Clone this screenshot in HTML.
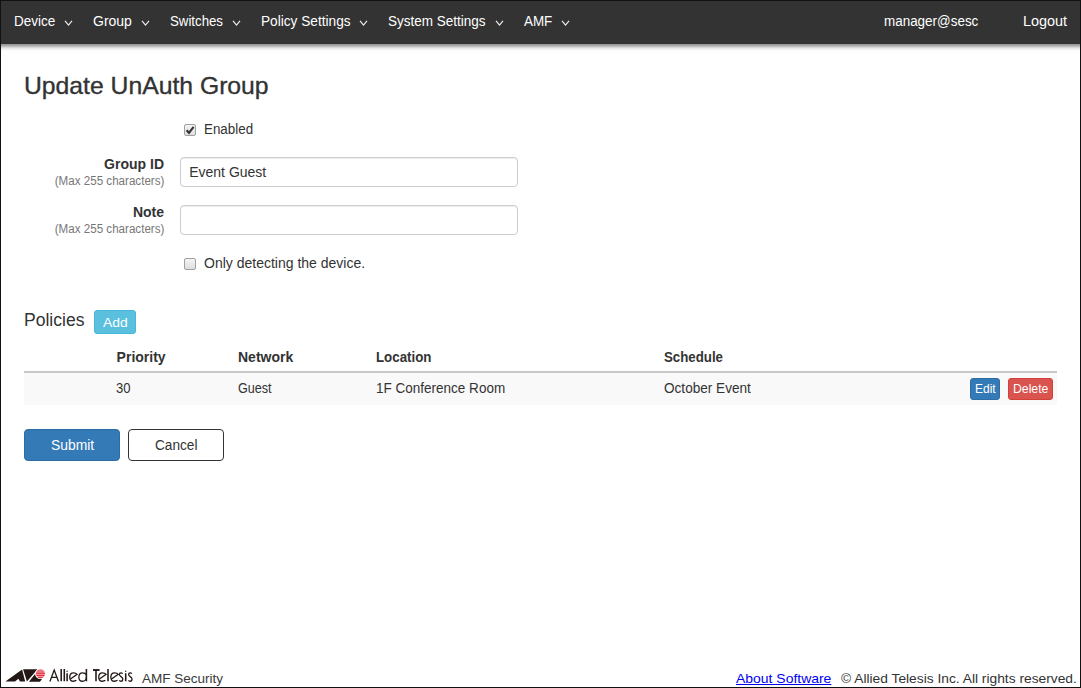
<!DOCTYPE html>
<html><head><meta charset="utf-8">
<style>
html,body{margin:0;padding:0;}
body{width:1081px;height:688px;position:relative;overflow:hidden;background:#fff;font-family:"Liberation Sans",sans-serif;color:#333;}
.frame{position:absolute;left:0;top:0;width:1079px;height:686px;border:1px solid #111;pointer-events:none;z-index:10;}
.nav{position:absolute;left:0;top:0;width:1081px;height:44px;background:#333;z-index:2;}
.shd{position:absolute;left:0;top:44px;width:1081px;height:8px;background:linear-gradient(to bottom,rgb(152,152,152) 0px,rgb(152,152,152) 1px,rgb(168,168,168) 1px,rgb(168,168,168) 2px,rgb(192,192,192) 2px,rgb(192,192,192) 3px,rgb(214,214,214) 3px,rgb(214,214,214) 4px,rgb(232,232,232) 4px,rgb(232,232,232) 5px,rgb(244,244,244) 5px,rgb(244,244,244) 6px,rgb(250,250,250) 6px,rgb(250,250,250) 7px,rgb(254,254,254) 7px,rgb(254,254,254) 8px);}
.t{position:absolute;white-space:nowrap;line-height:1;transform-origin:0 0;}
.r{transform-origin:100% 0;}
.n{color:#fff;font-size:14px;}
.chev{position:absolute;width:9px;height:8px;}
.b{font-weight:bold;}
.sub{color:#777;font-size:12px;}
.inp{position:absolute;left:180px;width:336px;height:28px;border:1px solid #ccc;border-radius:4px;box-shadow:inset 0 1px 1px rgba(0,0,0,.075);background:#fff;}
.cb{position:absolute;left:184px;width:10px;height:10px;border:1px solid #a0a0a0;border-radius:2px;background:linear-gradient(#f4f4f4,#dedede);box-sizing:content-box;}
.btn{position:absolute;border-radius:4px;box-sizing:border-box;}
</style></head><body>
<div class="shd"></div>
<div class="nav">
  <span class="t n" style="left:14px;top:14px;transform:scaleX(.964)">Device</span>
  <span class="t n" style="left:93px;top:14px;">Group</span>
  <span class="t n" style="left:169.7px;top:14px;transform:scaleX(.946)">Switches</span>
  <span class="t n" style="left:260.5px;top:14px;transform:scaleX(.976)">Policy Settings</span>
  <span class="t n" style="left:388px;top:14px;transform:scaleX(.964)">System Settings</span>
  <span class="t n" style="left:523.5px;top:14px;transform:scaleX(.957)">AMF</span>
  <span class="t n" style="left:883.5px;top:14px;transform:scaleX(.96)">manager@sesc</span>
  <span class="t n" style="left:1022.5px;top:14px;transform:scaleX(1.03)">Logout</span>
  <svg class="chev" style="left:63.6px;top:18.5px" viewBox="0 0 9 8"><path d="M1 1.8 L4.5 6.1 L8 1.8" fill="none" stroke="#f0f0f0" stroke-width="1.15"/></svg>
  <svg class="chev" style="left:141.2px;top:18.5px" viewBox="0 0 9 8"><path d="M1 1.8 L4.5 6.1 L8 1.8" fill="none" stroke="#f0f0f0" stroke-width="1.15"/></svg>
  <svg class="chev" style="left:232.0px;top:18.5px" viewBox="0 0 9 8"><path d="M1 1.8 L4.5 6.1 L8 1.8" fill="none" stroke="#f0f0f0" stroke-width="1.15"/></svg>
  <svg class="chev" style="left:358.8px;top:18.5px" viewBox="0 0 9 8"><path d="M1 1.8 L4.5 6.1 L8 1.8" fill="none" stroke="#f0f0f0" stroke-width="1.15"/></svg>
  <svg class="chev" style="left:494.6px;top:18.5px" viewBox="0 0 9 8"><path d="M1 1.8 L4.5 6.1 L8 1.8" fill="none" stroke="#f0f0f0" stroke-width="1.15"/></svg>
  <svg class="chev" style="left:560.6px;top:18.5px" viewBox="0 0 9 8"><path d="M1 1.8 L4.5 6.1 L8 1.8" fill="none" stroke="#f0f0f0" stroke-width="1.15"/></svg>
</div>

<span class="t" style="left:24px;top:74px;font-size:24px;transform:scaleX(1.03);-webkit-text-stroke:.35px #333">Update UnAuth Group</span>

<div class="cb" style="top:124px;"></div>
<svg style="position:absolute;left:185px;top:125px;width:10px;height:10px" viewBox="0 0 10 10"><path d="M1.6 5.2 L4 7.8 L8.6 1.8" fill="none" stroke="#333" stroke-width="2.1"/></svg>
<span class="t" style="left:204px;top:122.4px;font-size:14px;transform:scaleX(.956)">Enabled</span>

<span class="t b" style="right:917px;top:157px;font-size:14px;">Group ID</span>
<span class="t sub r" style="right:917px;top:175px;transform:scaleX(.967)">(Max 255 characters)</span>
<div class="inp" style="top:157px;"></div>
<span class="t" style="left:189.2px;top:165px;font-size:14px;">Event Guest</span>

<span class="t b" style="right:917px;top:205px;font-size:14px;">Note</span>
<span class="t sub r" style="right:917px;top:223px;transform:scaleX(.967)">(Max 255 characters)</span>
<div class="inp" style="top:205px;"></div>

<div class="cb" style="top:258px;"></div>
<span class="t" style="left:204px;top:256.2px;font-size:14px;">Only detecting the device.</span>

<span class="t" style="left:23.5px;top:311px;font-size:18px;transform:scaleX(.975)">Policies</span>
<div class="btn" style="left:94px;top:310px;width:42px;height:24px;background:#5bc0de;border:1px solid #46b8da;border-radius:3px;"></div>
<span class="t" style="left:102.6px;top:316.3px;font-size:13.5px;color:#fff;transform:scaleX(1.03)">Add</span>

<span class="t b" style="left:116.6px;top:350px;font-size:14px;">Priority</span>
<span class="t b" style="left:238px;top:350px;font-size:14px;">Network</span>
<span class="t b" style="left:376px;top:350px;font-size:14px;transform:scaleX(.95)">Location</span>
<span class="t b" style="left:664px;top:350px;font-size:14px;transform:scaleX(.948)">Schedule</span>
<div style="position:absolute;left:24px;top:371px;width:1033px;height:2px;background:#c8c8c8;"></div>
<div style="position:absolute;left:24px;top:373px;width:1033px;height:32px;background:#f9f9f9;"></div>
<span class="t" style="left:116.2px;top:381px;font-size:14px;transform:scaleX(.93)">30</span>
<span class="t" style="left:238px;top:381px;font-size:14px;transform:scaleX(.9)">Guest</span>
<span class="t" style="left:376px;top:381px;font-size:14px;transform:scaleX(.965)">1F Conference Room</span>
<span class="t" style="left:664px;top:381px;font-size:14px;transform:scaleX(.97)">October Event</span>
<div class="btn" style="left:970px;top:378px;width:30px;height:22px;background:#337ab7;border:1px solid #2e6da4;border-radius:3px;"></div>
<span class="t" style="left:975px;top:383px;font-size:12px;color:#fff;">Edit</span>
<div class="btn" style="left:1008px;top:378px;width:45px;height:22px;background:#d9534f;border:1px solid #d43f3a;border-radius:3px;"></div>
<span class="t" style="left:1013px;top:383px;font-size:12px;color:#fff;transform:scaleX(1.02)">Delete</span>

<div class="btn" style="left:24px;top:429px;width:96px;height:32px;background:#337ab7;border:1px solid #2e6da4;"></div>
<span class="t" style="left:50.6px;top:438px;font-size:14px;color:#fff;transform:scaleX(.99)">Submit</span>
<div class="btn" style="left:128px;top:429px;width:96px;height:32px;background:#fff;border:1px solid #333;"></div>
<span class="t" style="left:154.5px;top:438px;font-size:14px;color:#333;transform:scaleX(.975)">Cancel</span>

<svg style="position:absolute;left:0;top:660px;width:140px;height:28px" viewBox="0 660 140 28">
  <polygon points="5.36,681.6 22.1,669.4 25.2,681.6 20,681.6 18.4,678.8 15,681.6" fill="#231815"/>
  <polygon points="23.1,669.3 37.6,669.3 26.9,681.6" fill="#231815"/>
  <polygon points="28.9,681.7 36.5,672.3 41.9,679.2 39.9,681.7" fill="#231815"/>
  <circle cx="40.45" cy="673.7" r="5.4" fill="#fff"/>
  <defs><linearGradient id="rg" x1="0" y1="0" x2="0" y2="1">
    <stop offset="0" stop-color="#eb7880"/><stop offset=".44" stop-color="#eb7078"/>
    <stop offset=".44" stop-color="#e3414d"/><stop offset=".55" stop-color="#e3414d"/>
    <stop offset=".55" stop-color="#f0959c"/><stop offset=".64" stop-color="#f0959c"/>
    <stop offset=".64" stop-color="#e12e3b"/><stop offset=".76" stop-color="#e12e3b"/>
    <stop offset=".76" stop-color="#f29da3"/><stop offset=".84" stop-color="#f29da3"/>
    <stop offset=".84" stop-color="#e12e3b"/><stop offset="1" stop-color="#e12e3b"/>
  </linearGradient></defs>
  <circle cx="40.45" cy="673.7" r="4.5" fill="url(#rg)"/>
  <path d="M49.9 681.4 L54.2 670.0 L58.5 681.4 M51.3 677.4 H56.9 M70.80 678.7 L77.10 674.4 C76.40 673.3 75.10 672.85 73.40 672.85 C71.20 672.85 69.75 674.8 69.75 677.2 C69.75 679.6 71.20 681.25 73.40 681.25 C74.60 681.25 75.60 680.9 76.40 680.3 M86.4 675.0 C85.9 673.7 84.4 672.95 82.6 672.95 C80.4 672.95 78.85 674.8 78.85 677.2 C78.85 679.6 80.4 681.25 82.6 681.25 C84.3 681.25 86.4 680 86.4 677.2 M93.0 670.0 H99.4 M99.80 678.7 L106.10 674.4 C105.40 673.3 104.10 672.85 102.40 672.85 C100.20 672.85 98.75 674.8 98.75 677.2 C98.75 679.6 100.20 681.25 102.40 681.25 C103.60 681.25 104.60 680.9 105.40 680.3 M111.90 678.7 L118.20 674.4 C117.50 673.3 116.20 672.85 114.50 672.85 C112.30 672.85 110.85 674.8 110.85 677.2 C110.85 679.6 112.30 681.25 114.50 681.25 C115.70 681.25 116.70 680.9 117.50 680.3 M122.60 673.6 C122.10 673.0 121.60 672.85 121.00 672.85 C120.00 672.85 119.40 673.6 119.40 674.6 C119.40 676.6 122.80 676.6 122.80 678.9 C122.80 680.3 122.00 681.25 120.90 681.25 C120.20 681.25 119.60 680.9 119.25 680.4 M131.80 673.6 C131.30 673.0 130.80 672.85 130.20 672.85 C129.20 672.85 128.60 673.6 128.60 674.6 C128.60 676.6 132.00 676.6 132.00 678.9 C132.00 680.3 131.20 681.25 130.10 681.25 C129.40 681.25 128.80 680.9 128.45 680.4 " fill="none" stroke="#231815" stroke-width="1.3" stroke-linecap="butt"/>
  <path d="M61.2 669.0 V681.3 M64.3 669.0 V681.3 M67.1 673.3 V681.3 M86.4 669.1 V681.3 M96.0 670.0 V681.3 M108.0 669.1 V681.3 M125.7 673.3 V681.3" fill="none" stroke="#231815" stroke-width="1.55"/>
  <path d="M93.0 670.0 H99.4" fill="none" stroke="#231815" stroke-width="1.5"/>
  <circle cx="67.1" cy="671.2" r="0.7" fill="#231815"/>
  <circle cx="125.7" cy="671.3" r="0.7" fill="#231815"/>
</svg>
<span class="t" style="left:142px;top:672.2px;font-size:13.5px;color:#3a3a3a;">AMF Security</span>
<span class="t" style="left:736px;top:672px;font-size:13px;color:#00e;text-decoration:underline;transform:scaleX(1.073)">About Software</span>
<span class="t" style="left:840.5px;top:672px;font-size:13px;color:#333;transform:scaleX(1.06)">© Allied Telesis Inc. All rights reserved.</span>

<div class="frame"></div>
</body></html>
